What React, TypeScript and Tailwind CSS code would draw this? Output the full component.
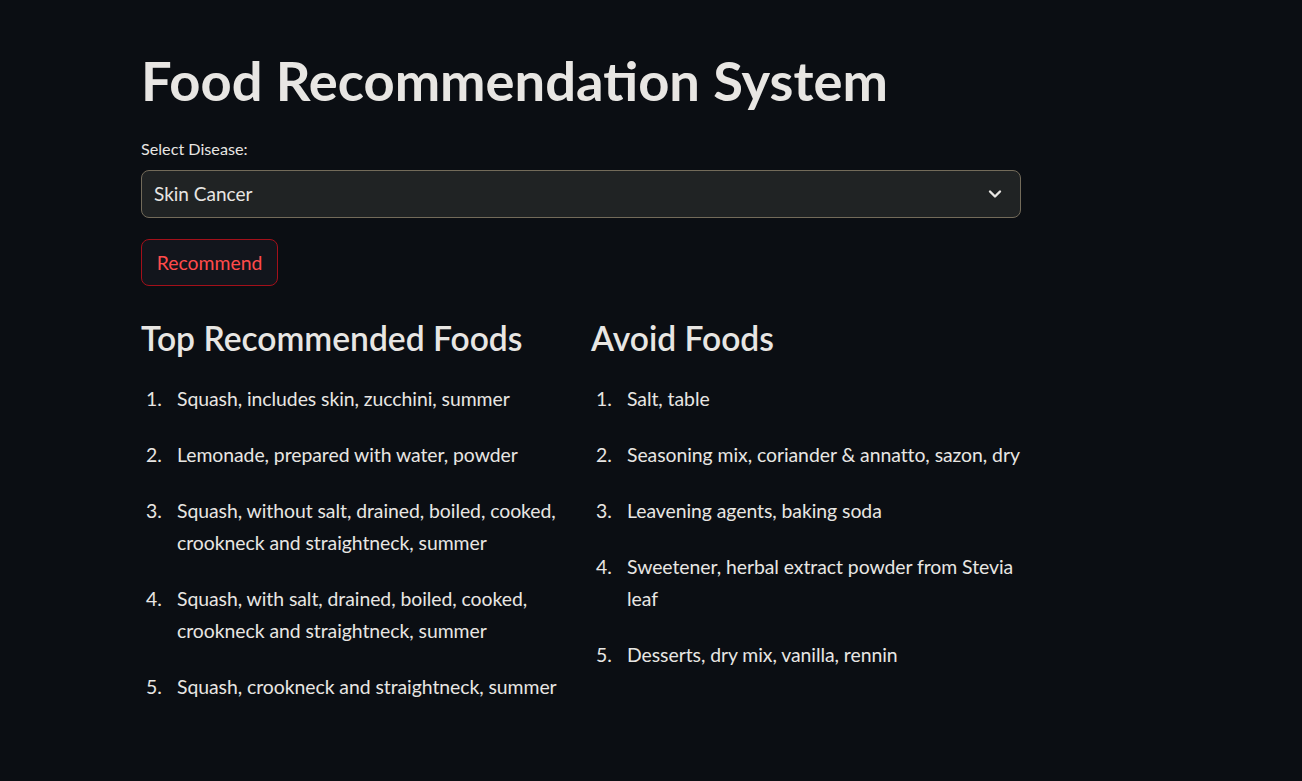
const recommended = [
  "Squash, includes skin, zucchini, summer",
  "Lemonade, prepared with water, powder",
  "Squash, without salt, drained, boiled, cooked, crookneck and straightneck, summer",
  "Squash, with salt, drained, boiled, cooked, crookneck and straightneck, summer",
  "Squash, crookneck and straightneck, summer",
];

const avoid = [
  "Salt, table",
  "Seasoning mix, coriander & annatto, sazon, dry",
  "Leavening agents, baking soda",
  "Sweetener, herbal extract powder from Stevia leaf",
  "Desserts, dry mix, vanilla, rennin",
];

const FoodList = ({ title, items }: { title: string; items: string[] }) => (
  <div className="flex flex-col">
    <h3 className="text-[33.6px] font-semibold leading-[44px] text-[#e8e6e3]">{title}</h3>
    <ol className="mt-[23px] flex flex-col gap-[24px]">
      {items.map((item, idx) => (
        <li key={idx} className="flex text-[19.4px] leading-[32px] tracking-[-0.05px] text-[#e8e6e3]">
          <span className="w-[36px] shrink-0 pl-[5px]">{idx + 1}.</span>
          <span>{item}</span>
        </li>
      ))}
    </ol>
  </div>
);

export default function App() {
  return (
    <div
      className="min-h-screen bg-[#0b0e13] pl-[141px] pt-[47px]"
      style={{ fontFamily: "Lato, 'Noto Sans', sans-serif" }}
    >
      <div className="flex w-[880px] flex-col">
        <h1 className="text-[54.3px] font-bold leading-[66px] text-[#e8e6e3]">
          Food Recommendation System
        </h1>

        <label className="mt-[25px] text-[16.2px] leading-[22px] text-[#e8e6e3]">Select Disease:</label>
        <div className="mt-[10px] flex h-[48px] items-center justify-between rounded-[8px] border border-[#736b5a] bg-[#202324] pl-[12px] pr-[18px]">
          <span className="text-[19px] text-[#e8e6e3]">Skin Cancer</span>
          <svg width="14" height="10" viewBox="0 0 14 10" fill="none">
            <polyline
              points="2,2.5 7,7.5 12,2.5"
              stroke="#e8e6e3"
              strokeWidth="2.4"
              strokeLinecap="round"
              strokeLinejoin="round"
            />
          </svg>
        </div>

        <div className="mt-[21px]">
          <button className="h-[47px] w-[137px] rounded-[8px] border border-[#a3101a] bg-[#12151c] text-[19.4px] text-[#ff4b4b]">
            Recommend
          </button>
        </div>

        <div className="mt-[30px] grid grid-cols-2 gap-[20px]">
          <FoodList title="Top Recommended Foods" items={recommended} />
          <FoodList title="Avoid Foods" items={avoid} />
        </div>
      </div>
    </div>
  );
}
